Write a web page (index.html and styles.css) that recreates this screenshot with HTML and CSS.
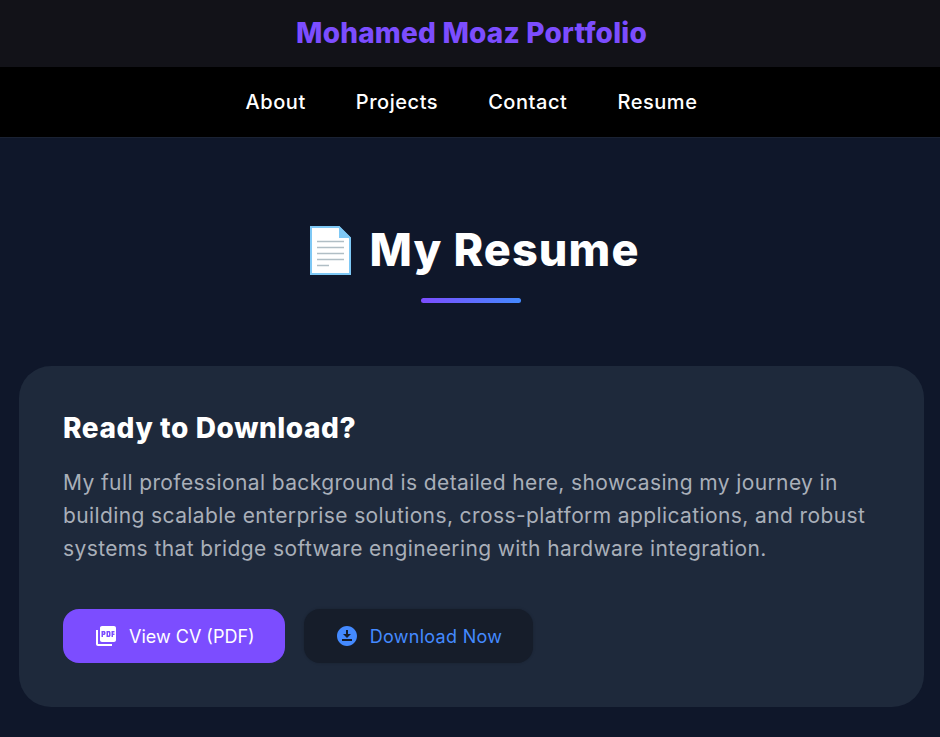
FILE: index.html
```html
<!DOCTYPE html>
<html>
<head>
  <meta charset="UTF-8">
  <title>Mohamed Moaz Portfolio</title>
  <link rel="stylesheet" href="styles.css">
</head>
<body>
  <div class="page">
    <header class="topbar">
      <h1>Mohamed Moaz Portfolio</h1>
    </header>
    <nav class="nav">
      <a href="#">About</a>
      <a href="#">Projects</a>
      <a href="#">Contact</a>
      <a href="#">Resume</a>
    </nav>

    <main class="content">
      <div class="title-row">
        <svg class="doc-icon" viewBox="0 0 41 49" width="41" height="49" aria-hidden="true">
          <path d="M1 1H29L40 12V48H1Z" fill="#fff" stroke="#7ec8f5" stroke-width="2"/>
          <path d="M29 0L41 12H29Z" fill="#7ec8f5"/>
          <path d="M7 15.500H34M7 21.500H34M7 27.500H34M7 33.500H34M7 39.500H19" stroke="#b0bec5" stroke-width="1.500"/>
        </svg>
        <h2>My Resume</h2>
      </div>
      <div class="underline"></div>

      <section class="card">
        <h3>Ready to Download?</h3>
        <p>My full professional background is detailed here, showcasing my journey in building scalable enterprise solutions, cross-platform applications, and robust systems that bridge software engineering with hardware integration.</p>
        <div class="actions">
          <a class="btn btn-primary" href="#">
            <svg viewBox="0 0 24 24" width="24" height="24" fill="currentColor" aria-hidden="true"><path d="M20 2H8c-1.1 0-2 .9-2 2v12c0 1.1.9 2 2 2h12c1.1 0 2-.9 2-2V4c0-1.1-.9-2-2-2zm-8.500 7.500c0 .83-.67 1.500-1.500 1.500H9v2H7.500V7H10c.83 0 1.500.67 1.500 1.500v1zm5 2c0 .83-.67 1.500-1.500 1.500h-2.500V7H15c.83 0 1.500.67 1.500 1.500v3zm4-3H19v1h1.500V11H19v2h-1.500V7h3v1.500zM9 9.500h1v-1H9v1zM4 6H2v14c0 1.100.9 2 2 2h14v-2H4V6zm10 5.500h1v-3h-1v3z"/></svg>
            View CV (PDF)
          </a>
          <a class="btn btn-dark" href="#">
            <svg viewBox="0 0 24 24" width="24" height="24" fill="currentColor" aria-hidden="true"><path d="M12 2C6.490 2 2 6.490 2 12s4.490 10 10 10 10-4.490 10-10S17.510 2 12 2zm-1 8V6h2v4h3l-4 4-4-4h3zm6 7H7v-2h10v2z"/></svg>
            Download Now
          </a>
        </div>
      </section>
    </main>
  </div>
</body>
</html>
```

FILE: styles.css
```css
html {
  background-color: #0f172a;
  overflow: hidden;
}
body {
  margin: 0;
  font-family: Inter, 'Noto Sans', sans-serif;
  color: #fff;
}
.page {
  width: 943px;
}
.topbar {
  height: 67px;
  padding-bottom: 2px;
  box-sizing: border-box;
  background-color: #121218;
  display: flex;
  align-items: center;
  justify-content: center;
}
.topbar h1 {
  margin: 0;
  font-size: 28px;
  font-weight: 800;
  letter-spacing: 0.2px;
  color: #7c4dff;
}
.nav {
  height: 71px;
  padding-bottom: 1px;
  box-sizing: border-box;
  background-color: #000;
  border-bottom: 1px solid #1a2233;
  display: flex;
  align-items: center;
  justify-content: center;
  gap: 50px;
}
.nav a {
  color: #fff;
  text-decoration: none;
  font-size: 20px;
  font-weight: 500;
  letter-spacing: 0.55px;
}
.content {
  padding: 84px 19px 30px;
}
.title-row {
  display: flex;
  align-items: center;
  justify-content: center;
}
.doc-icon {
  margin: 0 18px 0 7px;
}
.title-row h2 {
  margin: 0;
  font-size: 45px;
  font-weight: 800;
  line-height: 56px;
  letter-spacing: 1.1px;
}
.underline {
  width: 100px;
  height: 5px;
  margin: 20px 403px 63px 402px;
  border-radius: 3px;
  background: linear-gradient(90deg, #7c4dff, #448aff);
}
.card {
  background-color: #1e293b;
  border-radius: 32px;
  padding: 44px;
  height: 341px;
  box-sizing: border-box;
}
.card h3 {
  margin: 0 0 20px;
  font-size: 28px;
  font-weight: 800;
  line-height: 36px;
  letter-spacing: 0.6px;
}
.card p {
  margin: 0 0 44px;
  font-size: 21px;
  line-height: 33px;
  letter-spacing: 0.39px;
  color: #a9afb9;
}
.actions {
  display: flex;
  align-items: center;
  gap: 19px;
}
.btn {
  height: 54px;
  padding: 0 31px;
  box-sizing: border-box;
  display: flex;
  align-items: center;
  gap: 11px;
  border-radius: 16px;
  text-decoration: none;
  font-size: 18px;
}
.btn-primary {
  padding-right: 30px;
  background-color: #7c4dff;
  color: #fff;
}
.btn-dark {
  background-color: #161d2a;
  color: #448aff;
  letter-spacing: 0.3px;
  box-shadow: 0 0 3px rgba(0, 0, 0, 0.2);
}
```
